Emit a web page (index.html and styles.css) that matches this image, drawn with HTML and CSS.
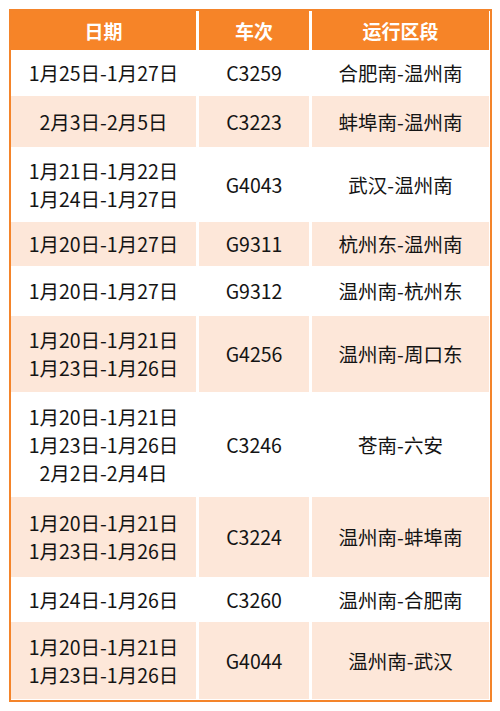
FILE: index.html
```html
<!DOCTYPE html>
<html lang="zh">
<head>
<meta charset="utf-8">
<link rel="stylesheet" href="styles.css">
</head>
<body>
<div class="table">
  <div class="cell head">日期</div><div class="cell head">车次</div><div class="cell head">运行区段</div>

  <div class="cell">1月25日-1月27日</div><div class="cell">C3259</div><div class="cell">合肥南-温州南</div>
  <div class="cell alt">2月3日-2月5日</div><div class="cell alt">C3223</div><div class="cell alt">蚌埠南-温州南</div>
  <div class="cell">1月21日-1月22日<br>1月24日-1月27日</div><div class="cell">G4043</div><div class="cell">武汉-温州南</div>
  <div class="cell alt">1月20日-1月27日</div><div class="cell alt">G9311</div><div class="cell alt">杭州东-温州南</div>
  <div class="cell">1月20日-1月27日</div><div class="cell">G9312</div><div class="cell">温州南-杭州东</div>
  <div class="cell alt">1月20日-1月21日<br>1月23日-1月26日</div><div class="cell alt">G4256</div><div class="cell alt">温州南-周口东</div>
  <div class="cell">1月20日-1月21日<br>1月23日-1月26日<br>2月2日-2月4日</div><div class="cell">C3246</div><div class="cell">苍南-六安</div>
  <div class="cell alt">1月20日-1月21日<br>1月23日-1月26日</div><div class="cell alt">C3224</div><div class="cell alt">温州南-蚌埠南</div>
  <div class="cell">1月24日-1月26日</div><div class="cell">C3260</div><div class="cell">温州南-合肥南</div>
  <div class="cell alt">1月20日-1月21日<br>1月23日-1月26日</div><div class="cell alt">G4044</div><div class="cell alt">温州南-武汉</div>
</div>
</body>
</html>
```

FILE: styles.css
```css
html, body {
  margin: 0;
  padding: 0;
  background: #ffffff;
}
body {
  padding: 9px 0 0 9px;
  font-family: "Noto Sans CJK SC", sans-serif;
}
.table {
  width: 478px;
  border: 2px solid #f4842a;
  padding: 0 1px 1px 0;
  display: grid;
  grid-template-columns: 185px 110px 177px;
  grid-template-rows: 39px 40px 51px 69px 44px 44px 76px 99px 80px 39px 77px;
  gap: 3px;
  background: #ffffff;
}
.cell {
  display: flex;
  align-items: center;
  justify-content: center;
  text-align: center;
  font-family: "Noto Sans CJK SC", sans-serif;
  font-size: 19.5px;
  line-height: 28px;
  color: #141414;
  background: #ffffff;
}
.alt {
  background: #fde7d9;
}
.head {
  background: #f68428;
  color: #ffffff;
  font-weight: 700;
  font-size: 19px;
}
```
